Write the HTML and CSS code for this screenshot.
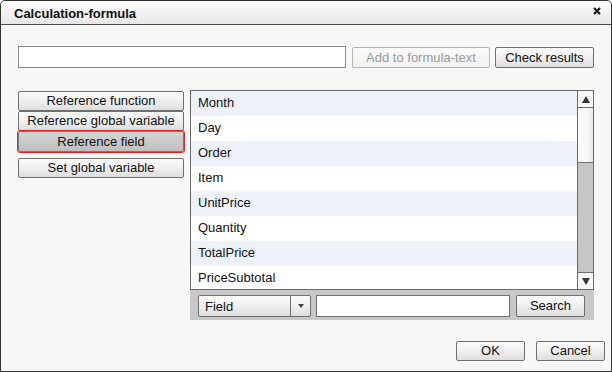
FILE: index.html
```html
<!DOCTYPE html>
<html>
<head>
<meta charset="utf-8">
<link rel="stylesheet" href="styles.css">
</head>
<body>
<div class="dialog">
  <div class="titlebar">
    <span class="title">Calculation-formula</span>
    <svg class="close" width="8" height="8" viewBox="0 0 8 8"><path d="M1 1L7 7M7 1L1 7" stroke="#111" stroke-width="2"/></svg>
  </div>
  <div class="content">
    <div class="formula-row">
      <input class="formula" type="text">
      <button class="btn disabled btn-add">Add to formula-text</button>
      <button class="btn btn-check">Check results</button>
    </div>
    <div class="main">
      <div class="side">
        <button class="btn side-btn">Reference function</button>
        <button class="btn side-btn">Reference global variable</button>
        <button class="btn side-btn active">Reference field</button>
        <button class="btn side-btn gap">Set global variable</button>
      </div>
      <div class="panel">
        <div class="list">
          <div class="rows">
            <div class="row alt">Month</div>
            <div class="row">Day</div>
            <div class="row alt">Order</div>
            <div class="row">Item</div>
            <div class="row alt">UnitPrice</div>
            <div class="row">Quantity</div>
            <div class="row alt">TotalPrice</div>
            <div class="row">PriceSubtotal</div>
          </div>
          <div class="scrollbar">
            <div class="sb-btn"><span class="tri up"></span></div>
            <div class="sb-thumb"></div>
            <div class="sb-track"></div>
            <div class="sb-btn down"><span class="tri dn"></span></div>
          </div>
        </div>
        <div class="toolbar">
          <div class="select">
            <span class="sel-text">Field</span>
            <span class="sel-arrow"><span class="tri small"></span></span>
          </div>
          <input class="search-input" type="text">
          <button class="btn btn-search">Search</button>
        </div>
      </div>
    </div>
    <div class="footer">
      <button class="btn btn-foot">OK</button>
      <button class="btn btn-foot">Cancel</button>
    </div>
  </div>
</div>
</body>
</html>
```
FILE: styles.css
```css
* { box-sizing: border-box; }
html, body { margin: 0; padding: 0; background: #f7f8f6; }
body { font-family: "Liberation Sans", Arial, sans-serif; font-size: 13px; color: #111; }

.dialog {
  width: 612px; height: 372px;
  border: 1px solid #333;
  border-radius: 5px 5px 0 0;
  background: #f7f8f6;
  display: flex; flex-direction: column;
  overflow: hidden;
}
.titlebar {
  height: 24px;
  border-bottom: 1px solid #4a4a4a;
  background: linear-gradient(#fdfdfd, #e6e7e6);
  display: flex; align-items: center; justify-content: space-between;
  padding: 0 10px 0 13px;
  border-radius: 4px 4px 0 0;
}
.title { font-weight: bold; font-size: 13px; color: #111; margin-top: 1px; }
.close { display: block; margin-top: -3px; }

.content { flex: 1; padding: 21px 17px 0 17px; display: flex; flex-direction: column; }

.formula-row { display: flex; align-items: center; height: 22px; }
.formula {
  width: 328px; height: 22px; margin: 0;
  border: 1px solid #8a8a8a; background: #fff; padding: 0 4px;
}
.btn {
  font-family: "Liberation Sans", Arial, sans-serif; font-size: 13px; color: #111;
  height: 21px; padding: 0; margin: 0;
  border: 1px solid #6f6f6f; border-radius: 2px;
  background: linear-gradient(#fbfbfb, #f1f1f1 45%, #dedede);
  line-height: 19px; text-align: center;
  cursor: default;
}
.btn.disabled { color: #9a9a9a; border-color: #b5b5b5; background: linear-gradient(#fafafa, #f2f2f2); }
.btn-add { width: 138px; margin-left: 6px; }
.btn-check { width: 99px; margin-left: 5px; }

.main { display: flex; margin-top: 22px; }
.side { width: 166px; margin-right: 6px; padding-top: 1px; display: flex; flex-direction: column; }
.side-btn { width: 166px; height: 20px; line-height: 18px; }
.side-btn.active {
  position: relative;
  border: 1px solid #7a7a7a;
  outline: 1px solid #f01e1e;
  background: linear-gradient(#d3d4d3, #bebfbe);
  height: 21px; line-height: 19px;
}
.side-btn.gap { margin-top: 6px; }

.panel { width: 404px; display: flex; flex-direction: column; }
.list {
  height: 200px;
  border: 1px solid #6a6a6a;
  display: flex;
  background: #fff;
  overflow: hidden;
}
.rows { flex: 1; overflow: hidden; }
.row { height: 25px; line-height: 23px; padding-left: 7px; background: #fff; }
.row.alt { background: #edf2fa; }

.scrollbar {
  width: 16px; border-left: 1px solid #6a6a6a;
  display: flex; flex-direction: column; background: #c8c8c8;
}
.sb-btn {
  height: 17px; background: #f7f7f7; border-bottom: 1px solid #6a6a6a;
  display: flex; align-items: center; justify-content: center;
}
.sb-btn.down { border-bottom: none; border-top: 1px solid #6a6a6a; }
.sb-thumb {
  height: 55px;
  background: linear-gradient(90deg, #fff, #f4f4f4 70%, #e6e6e6);
  border-bottom: 1px solid #777;
}
.sb-track { flex: 1; background: #c6c6c6; }
.tri { width: 0; height: 0; border-left: 4px solid transparent; border-right: 4px solid transparent; }
.tri.up { border-bottom: 7px solid #333; }
.tri.dn { border-top: 7px solid #333; }
.tri.small { border-left-width: 3px; border-right-width: 3px; border-top: 4px solid #444; }

.toolbar {
  height: 30px; background: #c8c8c8;
  display: flex; align-items: center; padding: 1px 9px 0 8px;
}
.select {
  width: 113px; height: 22px;
  border: 1px solid #6f6f6f; border-radius: 2px;
  display: flex;
  background: linear-gradient(#fbfbfb, #f1f1f1 45%, #dedede);
}
.sel-text { flex: 1; padding-left: 6px; line-height: 21px; }
.sel-arrow {
  width: 20px; border-left: 1px solid #6f6f6f;
  display: flex; align-items: center; justify-content: center;
}
.search-input {
  width: 194px; height: 22px; margin: 0 0 0 5px;
  border: 1px solid #6f6f6f; background: #fff;
}
.btn-search { width: 69px; height: 22px; margin-left: 6px; line-height: 20px; }

.footer { display: flex; justify-content: flex-end; margin-top: 21px; margin-right: -11px; }
.btn-foot { width: 69px; height: 20px; line-height: 18px; margin-left: 11px; }
```
